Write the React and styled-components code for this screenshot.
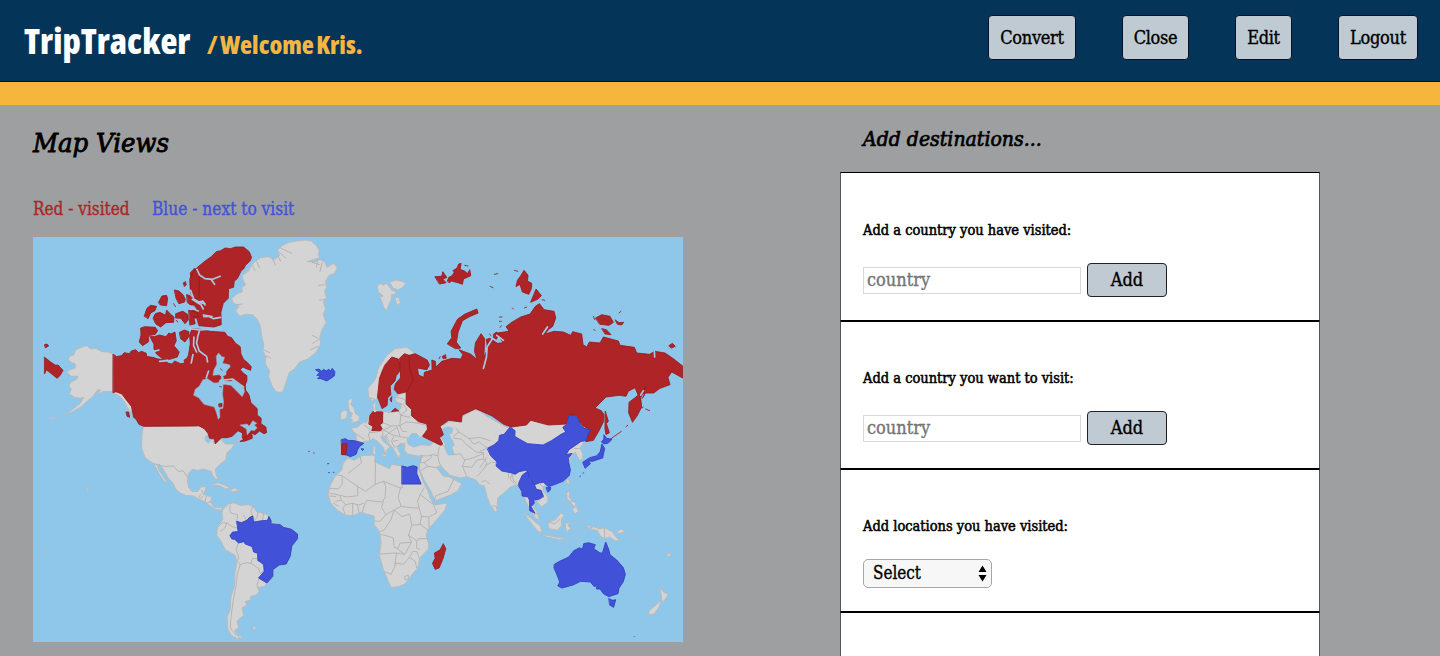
import React from 'react';
import styled, { createGlobalStyle } from 'styled-components';

const SLAB = `"DejaVu Serif Condensed", "DejaVu Serif", serif`;

const GlobalStyle = createGlobalStyle`
  * { box-sizing: border-box; }
  html, body { height: 100%; overflow: hidden; }
  body { margin: 0; background: #9e9fa0; color: #000; font-family: ${SLAB}; font-stretch: condensed; }
  h1, h2, h3, p { margin: 0; font-weight: 400; }
`;

/* Text narrowed or widened from one side so it keeps its height */
const Fit = styled.span`
  display: inline-block;
  white-space: nowrap;
  transform: scaleX(${(p) => p.$x || 1});
  transform-origin: ${(p) => p.$from || 'left'} center;
`;

const Header = styled.header`
  display: flex;
  justify-content: space-between;
  height: 82px;
  padding: 14px 22px 0 24px;
  background: #043559;
  border-bottom: 1px solid #06112b;
`;
const Brand = styled.div`
  display: flex;
  align-items: baseline;
  height: 56px;
  font-family: "Open Sans", sans-serif;
  font-weight: 800;
`;
const Logo = styled.h1`
  width: 183px;
  font-size: 36px;
  line-height: 54px;
  font-weight: 800;
  color: #fff;
`;
const Welcome = styled.p`
  font-size: 25px;
  line-height: 54px;
  font-weight: 800;
  word-spacing: -2px;
  color: #f4b640;
`;
const Nav = styled.nav`
  display: flex;
  gap: 46px;
`;
const NavButton = styled.button`
  display: flex;
  align-items: center;
  justify-content: center;
  width: ${(p) => p.$w}px;
  height: 45px;
  margin-top: 1px;
  padding: 0 0 1px;
  border: 1px solid #06102a;
  border-radius: 4px;
  background: #bfcad2;
  color: #000;
  font: 18px ${SLAB};
  font-stretch: condensed;
  letter-spacing: -0.3px;
  -webkit-text-stroke: 0.35px #000;
`;
const GoldBar = styled.div`
  height: 23px;
  background: #f6b63c;
`;
const Main = styled.main`
  display: grid;
  grid-template-columns: 807px 480px;
  padding-left: 33px;
  height: 551px;
`;
const MapColumn = styled.section`
  padding-top: 18px;
`;
const MapTitle = styled.h2`
  font-size: 26px;
  line-height: 40px;
  font-style: italic;
  -webkit-text-stroke: 0.8px #000;
`;
const Legend = styled.div`
  display: flex;
  margin-top: 30px;
  height: 44px;
  font-size: 18px;
  line-height: 32px;
  -webkit-text-stroke: 0.35px currentColor;
`;
const LegendItem = styled.span`
  width: ${(p) => p.$w}px;
  color: ${(p) => p.$color};
  -webkit-text-stroke-color: ${(p) => p.$color};
`;
const Map = styled.svg`
  display: block;
  width: 650px;
  height: 405px;
  background: #8fc7eb;
  stroke-linejoin: round;
  stroke-linecap: round;
`;
const Panel = styled.section`
  display: flex;
  flex-direction: column;
  height: 551px;
  padding-top: 14px;
`;
const PanelTitle = styled.h2`
  padding-left: 23px;
  height: 53px;
  font-size: 21px;
  line-height: 40px;
  font-style: italic;
  -webkit-text-stroke: 0.7px #000;
`;
const Card = styled.form`
  height: ${(p) => p.$h}px;
  padding: ${(p) => p.$top}px 22px 0;
  border: 1px solid #000;
  border-left-color: #555;
  border-right-color: #555;
  background: #fff;
`;
const OpenCard = styled.div`
  flex: 1;
  border: 1px solid #555;
  border-top-color: #000;
  border-bottom: 0;
  background: #fff;
`;
const CardLabel = styled.h3`
  font-size: 14px;
  line-height: 20px;
  -webkit-text-stroke: 0.5px #000;
`;
const Field = styled.div`
  display: flex;
  align-items: center;
  gap: 6px;
  height: 34px;
  margin-top: ${(p) => p.$mt || 23}px;
`;
const Input = styled.input`
  width: 218px;
  height: 27px;
  padding: 0 3px 2px;
  border: 1px solid #d9d9d9;
  font: 18px ${SLAB};
  font-stretch: condensed;
  &::placeholder { color: #757575; -webkit-text-stroke: 0.35px #757575; }
`;
const AddButton = styled.button`
  width: 80px;
  height: 34px;
  padding: 0 0 2px;
  border: 1px solid #222;
  border-radius: 4px;
  background: #bfcad2;
  color: #000;
  font: 18px ${SLAB};
  font-stretch: condensed;
  -webkit-text-stroke: 0.35px #000;
`;
const SelectBox = styled.div`
  display: flex;
  align-items: center;
  justify-content: space-between;
  width: 129px;
  height: 29px;
  padding: 0 4px 0 9px;
  border: 1px solid #a6a6a6;
  border-radius: 5px;
  background: #f7f7f7;
  font-size: 18px;
  line-height: 26px;
  -webkit-text-stroke: 0.35px #000;
`;

const Land = styled.g`
  path { fill: #d4d4d4; stroke: #b9bbbc; stroke-width: 3; }
`;
const Borders = styled.g`
  path { fill: none; stroke: #b5b5b5; stroke-width: 3; }
`;
const Visited = styled.g`
  path { fill: #ae2427; stroke: #98191d; stroke-width: 2.5; }
`;
const Next = styled.g`
  path { fill: #4152d9; stroke: #2f3fc0; stroke-width: 2.5; }
`;
const Water = styled.g`
  path { fill: #8fc7eb; stroke: #a7aeb6; stroke-width: 1.5; }
`;
const Strait = styled.g`
  path { fill: none; stroke: #a9c9e2; stroke-width: 5; }
`;

function WorldMap() {
  return (
    <Map viewBox="8 7 1951 1215" preserveAspectRatio="none" role="img" aria-label="World map">
      {/* Alaska and the Pacific islands */}
      <Land>
        <path d="M248 358 232 352 215 351 196 341 182 343 169 333 150 339 135 347 131 360 117 366 114 376 124 384 134 387 135 400 117 406 110 414 124 425 143 424 139 434 121 443 116 453 123 464 117 477 133 488 152 491 161 487 150 506 130 522 107 539 125 532 151 517 171 499 188 485 202 465 211 467 200 480 220 470 248 471 263 472 281 479 295 497 303 514 305 533 296 526 280 498 267 483 248 475Z" />
        <path d="M56 553 66 550 80 551M96 543l6-4M86 436l12 6M164 753l6 3M170 762l5 3-4 5-2-5ZM37 954l7 0M500 868l5 4" />
      </Land>
      {/* United States, Mexico, Central America */}
      <Land>
        <path d="M340 575 485 574 520 576 560 600 585 628 610 628 632 610 638 594 640 607 628 617 612 628 606 640 590 654 586 676 567 691 555 703 557 716 562 732 557 734 547 722 543 710 520 703 503 707 486 704 474 717 472 742 476 760 486 771 503 770 511 758 527 755 526 766 519 778 544 788 541 803 551 817 571 819 581 824 571 826 556 824 538 812 527 802 505 793 490 784 466 782 450 775 436 763 430 748 414 730 403 711 391 692 380 688 386 706 399 725 410 742 403 741 391 724 379 704 372 688 357 678 344 668 334 640 335 600Z" />
        <path d="M545 750 563 744 586 753 602 762 586 762 569 753ZM600 768 612 760 627 767 611 771ZM578 732l6 6M564 724l5 3M656 769l1 1M667 787l3 9M506 868l3 0" />
      </Land>
      <Water>
        <path d="M525 606 538 598 548 610 534 626 526 618ZM550 608 562 605 565 618 550 625Z" />
      </Water>
      <Borders>
        <path d="M372 687 400 695 430 694 445 711 458 708 472 728M510 780 506 790M518 776 514 766M520 783 510 794M528 785 524 801M541 800 533 804" />
      </Borders>

      {/* Canada */}
      <Visited>
        <path d="M249 359 259 366 273 363 282 354 297 357 303 349 316 345 325 354 334 350 348 356 349 365 371 369 383 373 409 376 411 385 425 388 433 379 451 387 464 385 461 377 471 370 475 360 480 327 478 301 486 282 509 284 540 290 570 292 584 293 592 305 604 309 615 325 630 336 632 357 639 373 652 384 663 396 661 407 648 402 638 397 630 405 640 416 650 423 650 438 645 451 646 466 656 480 662 504 681 522 681 541 693 551 692 567 707 577 709 594 701 597 688 589 675 600 664 596 662 605 642 615 636 610 637 595 623 588 606 605 590 609 574 609 555 628 553 613 538 611 533 596 522 582 505 573 487 574 340 575 326 569 317 553 310 548 304 516 286 493 275 478 257 471 249 474Z" />
        <path d="M505 95 526 78 543 66 558 51 571 48 585 40 600 42 616 37 640 37 657 51 664 68 660 78 646 92 640 103 633 108 622 131 612 140 610 158 595 162 594 191 579 206 572 233 573 270 551 277 506 273 500 251 484 247 482 229 501 224 492 212 478 209 490 181 480 164 479 139 483 116 497 102Z" />
        <path d="M494 101 502 111 505 127 494 136 485 130 480 116Z" />
        <path d="M480 130 494 104 507 119 507 189 493 192 482 176Z" />
        <path d="M332 280 343 276 375 278 382 288 375 299 355 302 355 321 337 333 327 322 332 302Z" />
        <path d="M360 304 372 306 388 301 407 306 416 295 422 298 434 292 438 318 431 333 447 352 441 367 418 374 395 371 379 358 371 342 371 328 365 318Z" />
        <path d="M342 244 350 221 361 212 379 215 374 228 361 235 354 251Z" />
        <path d="M369 250 375 237 389 233 406 242 409 226 420 238 431 247 430 263 407 264 391 277 377 268Z" />
        <path d="M385 203 395 184 409 182 412 192 409 213 391 211ZM433 166 446 169 458 180 465 194 463 202 446 207 438 192ZM470 180 481 184 490 201 484 211 472 204ZM460 144 466 141 468 151 463 155ZM430 207l6 9M437 237 450 232 458 230 473 240 474 256 464 267 452 251 437 250ZM476 227 502 234 504 247 490 245 495 267 480 271ZM448 293 462 286 476 291 475 307 464 322 452 313ZM438 257l5 5" />
        <path d="M288 532l7 0 3 16-7-3ZM630 620 644 612 651 600 666 602 666 611 645 619Z" />
      </Visited>
      <Strait>
        <path d="M500 104 508 121 524 132 547 134 570 125M481 167 491 194 510 204 524 207M521 246 535 245 550 252 571 248M478 282 510 286 570 281M508 287 503 304 499 325 507 349 529 365 532 382" />
        <path d="M486 194 512 210 519 223M501 204 518 199 524 211M519 241l26 5M484 221l20 8M491 307 490 333 499 352M488 360l-5 25M388 380 412 378M371 350 386 346M528 430 535 409M569 438 607 433 629 449 640 457M544 136l9 13" />
      </Strait>
      <Water>
        <path d="M490 481 495 464 507 455 518 435 532 432 551 445 564 444 574 431 568 420 548 422 551 405 560 389 558 365 565 355 575 366 583 368 577 386 598 390 600 396 588 410 587 420 578 425 583 439 602 440 609 436 627 447 640 456 643 471 636 486 622 472 602 452 579 449 577 479 580 501 578 521 568 524 569 548 564 554 558 532 552 517 521 509 506 490Z" />
        <path d="M630 571 650 568 657 574 668 558 680 566 672 571 681 579 672 588 663 586 651 601 649 584Z" />
      </Water>
      <Visited>
        <path d="M566 508 575 506 575 516 568 517ZM562 430l10-5M571 403l5 4M568 455l6 2" />
      </Visited>

      {/* Greenland and Iceland */}
      <Land>
        <path d="M605 191 619 179 638 170 633 160 646 150 640 139 635 123 654 110 665 90 676 79 691 69 714 66 731 75 749 61 740 49 754 34 776 23 799 19 826 16 844 20 859 33 868 49 864 59 869 69 849 75 831 81 850 82 870 75 884 82 891 98 910 86 921 98 914 115 896 123 886 140 890 157 883 170 889 189 880 202 886 222 879 240 888 264 876 283 869 306 871 329 857 354 831 374 808 382 795 401 777 414 771 432 762 460 757 473 739 472 727 457 715 425 718 409 705 386 707 368 698 348 701 331 694 302 691 275 680 252 666 240 646 239 629 245 616 229 627 214 609 205Z" />
      </Land>
      <Borders>
        <path d="M666 93l8 14M680 82l8 18M728 75l8 16M743 65l9 16M862 80l-4 18M876 85l-7 26M868 90l-22-7M700 346l19 8M704 363l17 7M846 302l17 8M848 326l19-13M841 345l23-10M612 211l24-3M885 150l-19 2M885 194l-17 3M742 49l25 21M745 37l40 19" />
      </Borders>
      <Next>
        <path d="M857 405 866 403 875 410 880 404 888 409 896 404 902 409 906 401 914 411 913 423 905 429 890 439 872 432 862 432 870 424 860 422 868 414Z" />
      </Next>

      {/* South America */}
      <g transform="translate(480 600)">
        <Land>
          <path d="M100 222 115 208 131 204 150 212 174 210 188 215 200 232 220 236 235 242 242 262 280 275 304 284 322 298 322 312 305 334 300 365 288 388 267 391 248 405 248 425 230 445 222 456 202 458 207 470 200 480 180 486 180 497 165 500 170 512 155 520 160 542 140 560 146 578 133 588 140 600 160 608 142 612 122 601 112 581 111 545 119 530 122 487 133 452 134 416 140 383 135 362 104 344 93 321 79 301 84 272 98 254 95 235ZM186 579l8-3 7 4-9 5Z" />
        </Land>
        <Borders>
          <path d="M120 211 118 225 122 235 142 240 140 260M84 276 96 264 110 265 104 280 91 290M110 265 127 276 140 280M188 215 182 230 188 246M204 232 200 248 190 262M220 236 217 257M160 242 170 257M145 322 138 345 145 364 142 382 150 390M150 390 141 418 138 450 130 490 126 520 122 550 120 580 138 602M150 390 168 384 182 386 187 371 203 372M182 386 205 401 210 417 222 407M207 431 200 450 202 458M144 602l3 8" />
        </Borders>
        <Next>
          <path d="M140 260 153 264 170 257 178 248 188 244 190 262 215 258 232 257 236 245 243 259 242 267 270 270 280 278 304 284 322 298 322 312 305 334 300 365 288 388 267 391 248 405 248 425 230 445 205 430 222 410 220 390 209 381 203 378 202 356 190 352 186 336 165 328 161 321 145 325 133 314 125 313 119 303 127 292 143 291Z" />
        </Next>
      </g>

      {/* Europe, Africa and western Asia, drawn together with the rest of the Eurasian mainland */}
      <g transform="translate(870 480)">
        <Land>
          <path d="M62 135 95 135 110 135 106 117 92 100 111 98 122 88 138 80 148 61 160 49 158 30 168 20 165 45 185 50 215 54 235 47 243 40 242 28 228 22 226 7 250-6 300-10 370 92 395 75 416 69 440 58 462 45 480 50 500 65 560 98 620 76 700 85 740 70 790 110 790 145 780 160 788 176 788 193 778 197 766 173 756 180 720 265 685 268 670 275 671 290 684 308 683 323 664 337 655 325 643 313 640 335 651 353 658 374 647 372 634 350 622 330 605 290 590 270 572 276 549 297 533 310 531 335 520 346 511 331 501 307 493 274 479 270 466 255 440 246 420 250 390 242 377 230 358 213 350 219 369 244 388 247 401 254 425 267 413 288 391 301 345 318 332 290 311 254 298 223 299 206 307 184 290 184 262 178 252 165 255 152 240 146 232 160 241 178 236 190 228 178 220 162 203 143 191 128 181 125 190 141 211 156 202 163 194 177 190 158 171 139 158 132 147 139 130 140 112 165 90 185 62 180Z" />
          <path d="M84 190 102 197 125 183 160 181 166 190 163 201 184 211 209 222 214 209 246 214 265 218 291 215 299 232 308 259 325 292 330 310 342 331 381 325 374 347 342 384 323 406 318 421 326 450 324 464 298 491 295 517 275 541 254 568 235 576 212 578 205 561 190 525 177 481 183 445 178 411 162 390 162 364 138 358 123 352 101 362 76 362 50 345 31 324 24 297 30 272 45 244 65 226 68 208Z" />
          <path d="M84 16 96 10 96 22 91 28 102 42 105 56 118 65 116 80 90 86 98 78 91 70 97 56 88 51 85 37ZM62 54 74 45 82 52 79 71 63 76ZM160 154l5 0 1 26-7-1ZM180 179l17 0-1 7ZM239 191l13 2M270 190l12-3M519 333l8 1 5 14-7 4-6-9ZM144 3 157 20 171 8 180-2 183-26" />
          <path d="M144-20 165-45 175-80 200-118 225-138 260-142 278-130 285-100 220-95 190-60 180 0 166 15 146 8Z" />
          <path d="M51-327 60-333 70-328 77-336 86-324 95-312 106-310 104-300 93-300 92-285 84-268 78-252 70-262 65-278 58-292 68-296 54-308ZM88-338 108-344 124-340 136-334 127-322 112-314 98-320ZM104-290 113-294 120-276 111-268ZM160-342l8-1M142-303l9 1" transform="translate(121 0)" />
        </Land>
        <Water>
          <path d="M263 147 262 133 276 116 290 117 298 129 313 126 339 144 328 153 306 150 281 157Z" />
          <path d="M368 102 384 96 398 101 395 116 386 119 397 138 402 151 395 158 402 180 384 181 374 160 375 146 365 132 357 116Z" />
        </Water>
        <Borders>
          <path d="M120 185 124 205 102 222 84 236M45 240 66 243 66 268 55 282 31 282M66 243 112 275 113 303 80 307 60 302 30 296M112 275 136 290 165 269 166 190M165 269 190 260 197 275 195 310 183 322 140 317 132 333 127 352M246 214 246 280 241 280 190 260M246 268 303 268M241 280 234 308 243 335 222 346 197 360 184 338 190 318M300 300 292 320 297 340 270 339 243 335M312 280 300 300 342 331M297 340 304 365 326 367 350 355 342 335M326 367 327 400M197 360 180 380 163 379M222 346 212 376 191 407 181 410M222 346 245 365 269 359 275 392 265 421 274 443 240 445 233 461 222 458 220 430 205 425 181 419M304 365 300 389 276 392M300 389 324 407M265 421 290 439 295 432 323 432M274 443 254 479 229 475 180 478M229 475 224 515 213 539 195 531M224 505 250 509 268 488 285 500 290 520 295 517M268 488 278 470 290 471 298 490M254 479 230 461M254 546 264 541 266 550 257 556ZM46 320 64 316 76 330 97 326 116 331 130 326M76 330 68 340 76 362M97 326 98 362M64 316 60 304M30 304 47 306M40 325 56 335M112 331 116 354M290 440 289 460 299 464" />
          <path d="M106 117 132 133M132 91 151 105 145 121 150 139M150 62 137 86M187 57 188 84 213 94 239 93 242 62 236 48M185 108 166 113 149 114M188 84 180 91 190 106 212 96M190 106 207 114 231 98 240 126 222 122 206 116M240 126 263 130M239 93 258 82 284 84 319 92M242 62 270 68M226 7 252 13 260 28M228 22 250 30 260 46 242 62M222 122 214 140 223 158 255 145M205 117 194 126 209 141M219 140 233 137M188 108 188 124 203 128M238 92 247 110 258 111M302 183 321 184 338 180 353 183 357 205 377 232M302 184 300 204 311 204 331 192 335 181M311 204 324 215 350 219M324 215 304 226M357 158 353 183M363 150 377 157M343 318 346 304 384 290 401 254M400 180 420 177 434 196 427 215 440 246M434 196 458 190 490 176M427 215 455 218 471 196 491 193 490 176M471 245 490 225 501 205 490 193M400 130 425 134 436 147 458 164 468 172 490 174M400 125 417 112 447 132 460 148 478 142 490 152 502 160M417 112 407 100M447 132 478 128 510 138M575 215 560 220 533 210M575 228 580 258 588 265M564 228 566 250M508 268 498 258 486 260" />
        </Borders>

        {/* countries in the two map colours */}
        <Next>
          <path d="M64 135 75 132 84 137 105 138 131 146 118 156 112 166 108 179 91 186 78 181 66 178ZM124 162l7 1-3 4ZM25 234l3 0M39 233l3 0" />
          <path d="M246 214 262 218 279 213 291 217 290 236 303 268 246 268Z" />
        </Next>
        <Visited>
          <path d="M66 148 81 147 77 180 65 180ZM22 207l4 0M-35 170l2 0M-20 175l2 0" />
          <path d="M150 61 159 50 163 55 170 51 188 52 187 85 179 90 186 103 181 108 155 108 158 95 147 89ZM215 50 225 41 235 48Z" />
          <path d="M370 448 377 462 369 491 357 520 345 524 337 506 345 491 343 475 359 466Z" />
        </Visited>
      </g>

      {/* Russia, Sweden and Finland */}
      <g transform="translate(990 0)">
        <Visited>
          <path d="M75 390 95 367 115 373 121 390 119 410 108 423 105 438 90 454 92 480 82 490 81 512 66 522 52 487 58 431 66 410ZM90 493l5-7-1 15Z" />
          <path d="M119 370 133 357 147 362 153 378 149 400 159 436 151 468 134 473 113 477 102 464 106 447 121 430 121 407Z" />
          <path d="M147 362 165 357 201 376 208 391 200 405 182 402 172 400 175 421 191 428 193 413 216 406 215 376 226 380 227 397 245 380 275 371 303 373 308 359 296 345 331 358 351 374 343 350 346 324 363 297 374 313 371 366 382 345 379 314 389 311 412 326 429 324 411 295 447 290 438 276 453 264 482 247 510 238 526 215 538 207 552 225 582 230 587 250 578 275 565 285 555 298 582 290 610 292 632 302 638 291 665 298 669 330 680 337 688 322 720 325 730 307 775 319 780 332 823 338 830 355 869 359 884 350 915 355 940 372 968 394 968 430 948 419 935 412 924 428 930 450 900 461 881 475 856 475 847 491 855 476 835 483 825 459 805 470 798 485 778 482 738 487 705 520 724 528 732 540 731 560 716 590 700 617 677 621 689 586 665 571 648 542 627 541 620 568 565 571 512 557 499 571 454 577 431 569 396 544 347 522 306 541 304 562 265 557 240 575 250 600 238 609 248 628 241 632 201 612 187 605 202 584 200 568 175 561 154 543 154 524 138 509 138 475 159 437 149 400Z" />
          <path d="M262 327 275 309 273 290 292 254 313 239 350 223 354 235 328 246 307 258 294 292 289 323 302 340 287 342ZM225 126 245 125 248 111 260 128 248 134 258 144 239 148ZM262 138 266 128 275 124 283 112 278 108 290 101 296 88 303 86 300 104 315 110 322 117 329 105 332 123 310 133 307 149 296 145 274 139 268 144ZM314 92l10 2M403 119l10-2M390 155l9 4M463 107l10 3M468 155 472 137 480 126 492 107 504 122 502 139 515 146 514 162 506 179 487 172 480 150ZM512 202 528 163 544 183 534 193ZM546 195l8 2M457 220l3 3M493 220l7-3M418 247l8 0M418 260l6 0M420 278l4-5M401 298l8-6 7 7-7 15-8-5ZM388 298l5 5M247 365l9-5 2 11-8 1ZM237 372l3-6" />
          <path d="M707 250 725 240 750 245 760 263 747 272 720 269ZM766 256 777 264 791 263 785 271 773 269ZM777 235l6-5M700 245l4 10M701 285l4 2M726 282 739 285 753 300 736 298ZM927 333 937 326 946 335 935 340ZM817 562 806 535 807 503 824 490 841 476 850 466 857 456 842 490 845 517 831 544ZM846 520l4-3M857 523l12 5M803 572l-5 4M784 590 750 614M736 530 745 560 739 567 748 594 738 600 735 584Z" />
        </Visited>
        <Strait>
          <path d="M381 338 379 368 370 401M410 302 430 317M397 312 383 334M562 277 548 298M883 351 884 367M850 468 842 481" />
        </Strait>
      </g>
      {/* Wrangel Island and the eastern tip of Chukotka */}
      <Visited>
        <path d="M43 330 50 328 55 334 46 339ZM43 368 62 383 76 392 83 391 98 407 89 423 80 431 68 421 54 410 48 406 43 417Z" />
      </Visited>

      {/* East Asia and Oceania */}
      <g transform="translate(1350 480)">
        <Next>
          <path d="M22 161 42 150 56 138 58 122 72 119 90 97 105 108 104 125 117 133 143 147 189 151 214 138 243 119 257 112 248 98 263 87 266 63 284 62 295 73 301 91 313 101 332 106 323 121 318 137 302 141 282 155 267 165 258 180 276 176 265 191 266 203 271 225 268 242 250 259 226 269 205 276 190 263 178 265 163 270 147 247 141 226 117 231 105 239 91 234 65 229 48 214 49 200 33 185Z" />
          <path d="M117 262 127 241 143 229 148 252 163 270 169 284 183 287 191 307 173 315 160 316 163 325 153 336 165 356 149 348 148 316 144 307 126 304 125 290 115 273ZM199 279 212 278 211 286 204 292Z" />
          <path d="M372 121 380 131 396 134 385 145 372 148 364 142 371 134ZM366 149 374 161 368 190 352 195 338 200 326 199 331 207 315 221 308 203 329 189 351 183 360 171ZM309 235l2 0M299 246l3-2" />
          <path d="M223 509 238 500 266 487 281 468 299 459 307 464 311 447 325 444 346 450 341 462 359 474 367 476 377 442 386 464 390 480 410 496 430 519 436 539 430 561 417 580 414 597 386 606 370 597 360 583 349 583 351 569 344 577 331 562 302 560 279 571 246 580 233 574 239 562 230 539 222 520ZM387 612 398 617 407 615 401 638 390 632ZM462 725l1 1" />
        </Next>
        <Land>
          <path d="M132 356 151 369 181 395 186 415 174 410 157 390ZM185 419 211 424 238 429 263 433 239 435 201 427ZM204 382 225 376 242 355 252 361 244 376 245 392 232 407 208 402ZM257 385 279 381 263 390 275 406 268 403 262 414 257 400ZM282 432l13 1M302 376l1 12M318 392l12 1-1 9ZM331 402 340 396 358 403 373 399 397 411 406 425 419 439 406 438 388 427 374 432 361 424 353 409ZM260 294 270 289 267 307 277 318 268 320 262 312ZM272 319 288 324 286 336 275 329ZM277 343 289 335 295 350 286 357ZM260 256 267 253 268 269 262 267ZM411 411 425 403 434 411 417 417ZM446 418 461 426M466 430 479 440M501 462l5 9M493 492l8 9M560 479 572 474 570 485 562 485ZM538 577 551 593 564 599 553 618 546 621 544 601ZM544 617 536 639 522 658 504 660 509 647 531 628ZM249 335l10-16M116 320l1 4M299 404l8 0" />
        </Land>
        <Borders>
          <path d="M373 399 374 432M205 382 224 388 239 373M283 162 299 161M178 266 190 279 190 291M190 307 175 319M162 359 174 356M22 161 0 170M20 189 0 218M49 205 35 202 16 213M95 237 91 255 104 268" />
        </Borders>
      </g>
    </Map>
  );
}

function VisitCard({ label, height, top, children }) {
  return (
    <Card $h={height} $top={top} onSubmit={(e) => e.preventDefault()}>
      <CardLabel><Fit $x={1.035}>{label}</Fit></CardLabel>
      {children}
    </Card>
  );
}

export default function App() {
  return (
    <>
      <GlobalStyle />
      <Header>
        <Brand>
          <Logo><Fit $x={0.97}>TripTracker</Fit></Logo>
          <Welcome><Fit $x={0.995}>/ Welcome Kris.</Fit></Welcome>
        </Brand>
        <Nav>
          <NavButton $w={88}>Convert</NavButton>
          <NavButton $w={67}>Close</NavButton>
          <NavButton $w={57}>Edit</NavButton>
          <NavButton $w={80}>Logout</NavButton>
        </Nav>
      </Header>
      <GoldBar />
      <Main>
        <MapColumn>
          <MapTitle><Fit $x={1.045}>Map Views</Fit></MapTitle>
          <Legend>
            <LegendItem $w={119} $color="#ae2427"><Fit $x={0.945}>Red - visited</Fit></LegendItem>
            <LegendItem $w={150} $color="#4152d9"><Fit $x={0.953}>Blue - next to visit</Fit></LegendItem>
          </Legend>
          <WorldMap />
        </MapColumn>
        <Panel>
          <PanelTitle><Fit>Add destinations...</Fit></PanelTitle>
          <VisitCard label="Add a country you have visited:" height={149} top={47}>
            <Field><Input placeholder="country" /><AddButton>Add</AddButton></Field>
          </VisitCard>
          <VisitCard label="Add a country you want to visit:" height={148} top={46}>
            <Field><Input placeholder="country" /><AddButton>Add</AddButton></Field>
          </VisitCard>
          <VisitCard label="Add locations you have visited:" height={143} top={46}>
            <Field $mt={20}>
              <SelectBox>
                <Fit $x={0.94}>Select</Fit>
                <svg width="9" height="17" viewBox="0 0 9 17"><path d="M4.5 0.5 8.5 7H.5ZM4.5 16.5 8.5 10H.5Z" /></svg>
              </SelectBox>
            </Field>
          </VisitCard>
          <OpenCard />
        </Panel>
      </Main>
    </>
  );
}
